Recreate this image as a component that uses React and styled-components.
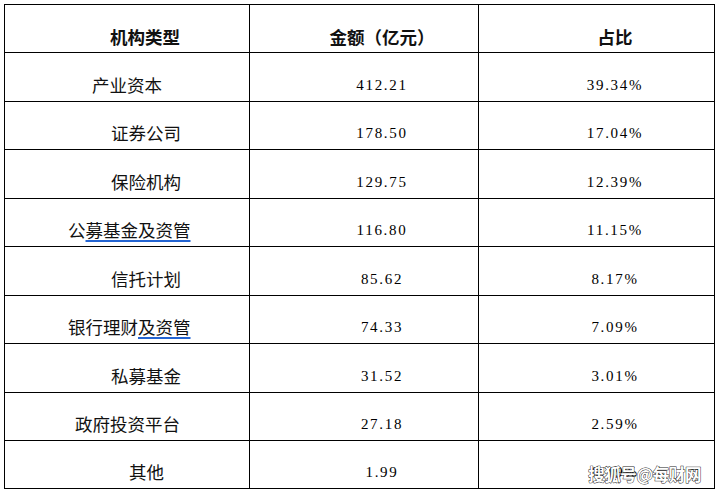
import React from 'react'
import styled, { createGlobalStyle } from 'styled-components';

const GlobalStyle = createGlobalStyle`
  html, body {
    margin: 0;
    padding: 0;
    background: #fff;
  }
  body {
    width: 720px;
    height: 495px;
    overflow: hidden;
    font-family: "Noto Sans CJK SC", "Liberation Serif", sans-serif;
    color: #111;
  }
`;

const Wrapper = styled.div`
  position: relative;
  padding: 4px 0 0 4px;
  width: 710px;
`;

const Table = styled.table`
  border-collapse: collapse;
  table-layout: fixed;
  width: 710px;
`;

const Row = styled.tr`
  height: ${p => p.h}px;
`;

const Cell = styled.td`
  border: 1px solid #000;
  padding: 0 0 ${p => (p.head ? 3 : 4)}px ${p => p.pad || 0}px;
  vertical-align: bottom;
  text-align: ${p => (p.left ? 'left' : 'center')};
  font-size: 17.5px;
  line-height: 24px;
  font-weight: ${p => (p.head ? 700 : 400)};
  white-space: nowrap;
`;

const Num = styled.span`
  font-family: "Liberation Serif", serif;
  font-size: 15px;
  letter-spacing: 1.7px;
  color: #000;
`;

const Link = styled.span`
  text-decoration: underline;
  text-decoration-color: #2364d2;
  text-decoration-thickness: 2px;
  text-underline-offset: 3px;
`;

const Watermark = styled.div`
  position: absolute;
  right: 13px;
  bottom: 6px;
  font-family: "Noto Sans CJK SC", sans-serif;
  font-size: 16.5px;
  font-weight: 700;
  line-height: 18px;
  color: #fff;
  -webkit-text-stroke: 0.9px #1a1a1a;
  paint-order: stroke fill;
  letter-spacing: -0.4px;
`;

const rows = [
  { name: '产业资本', pad: 87, amount: '412.21', pct: '39.34%' },
  { name: '证券公司', pad: 106, amount: '178.50', pct: '17.04%' },
  { name: '保险机构', pad: 106, amount: '129.75', pct: '12.39%' },
  { name: ['公', <Link key="l">募基金及资管</Link>], pad: 63, amount: '116.80', pct: '11.15%' },
  { name: '信托计划', pad: 106, amount: '85.62', pct: '8.17%' },
  { name: ['银行理财', <Link key="l">及资管</Link>], pad: 63, amount: '74.33', pct: '7.09%' },
  { name: '私募基金', pad: 106, amount: '31.52', pct: '3.01%' },
  { name: '政府投资平台', pad: 70, amount: '27.18', pct: '2.59%' },
  { name: '其他', pad: 124, amount: '1.99', pct: '0.19%' },
];

const heights = [49, 48, 49, 48, 49, 48, 49, 48, 48];

export default function App() {
  return (
    <Wrapper>
      <GlobalStyle />
      <Table>
        <colgroup>
          <col style={{ width: 245 }} />
          <col style={{ width: 229 }} />
          <col style={{ width: 236 }} />
        </colgroup>
        <tbody>
          <Row h={48}>
            <Cell head left pad={105}>机构类型</Cell>
            <Cell head pad={36}>金额（亿元）</Cell>
            <Cell head pad={37}>占比</Cell>
          </Row>
          {rows.map((item, i) =>
            <Row h={heights[i]} key={i}>
              <Cell left pad={item.pad}>{item.name}</Cell>
              <Cell pad={36}><Num>{item.amount}</Num></Cell>
              <Cell pad={37}><Num>{item.pct}</Num></Cell>
            </Row>
          )}
        </tbody>
      </Table>
      <Watermark>搜狐号@每财网</Watermark>
    </Wrapper>
  )
}
